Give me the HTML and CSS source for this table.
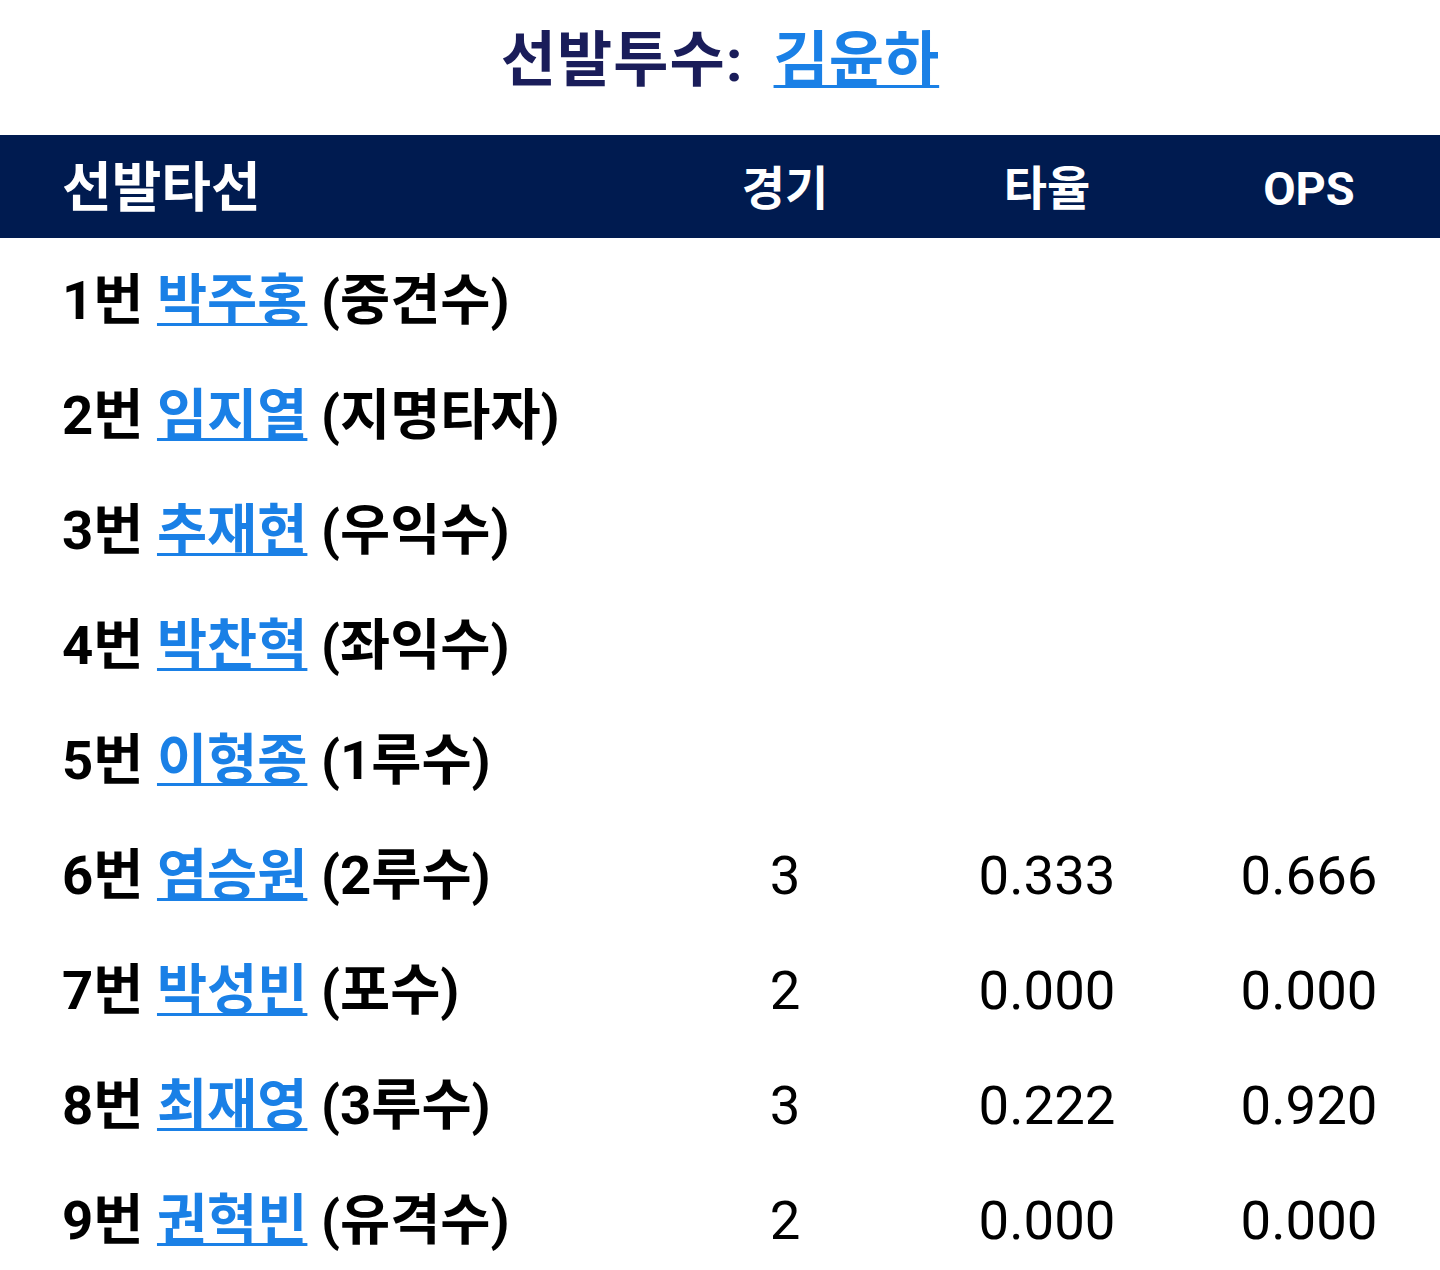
FILE: index.html
```html
<!DOCTYPE html>
<html lang="ko">
<head>
<meta charset="utf-8">
<link rel="stylesheet" href="styles.css">
</head>
<body>
<h1 class="title"><span class="label">선발투수:</span> <a class="link" href="#">김윤하</a></h1>
<div class="table">
  <div class="head">
    <div class="cell name-cell">선발타선</div>
    <div class="cell num">경기</div>
    <div class="cell num">타율</div>
    <div class="cell num">OPS</div>
  </div>
  <div class="row"><div class="cell name-cell">1번 <a class="link" href="#">박주홍</a> (중견수)</div><div class="cell num stat"></div><div class="cell num stat"></div><div class="cell num stat"></div></div>
  <div class="row"><div class="cell name-cell">2번 <a class="link" href="#">임지열</a> (지명타자)</div><div class="cell num stat"></div><div class="cell num stat"></div><div class="cell num stat"></div></div>
  <div class="row"><div class="cell name-cell">3번 <a class="link" href="#">추재현</a> (우익수)</div><div class="cell num stat"></div><div class="cell num stat"></div><div class="cell num stat"></div></div>
  <div class="row"><div class="cell name-cell">4번 <a class="link" href="#">박찬혁</a> (좌익수)</div><div class="cell num stat"></div><div class="cell num stat"></div><div class="cell num stat"></div></div>
  <div class="row"><div class="cell name-cell">5번 <a class="link" href="#">이형종</a> (1루수)</div><div class="cell num stat"></div><div class="cell num stat"></div><div class="cell num stat"></div></div>
  <div class="row"><div class="cell name-cell">6번 <a class="link" href="#">염승원</a> (2루수)</div><div class="cell num stat">3</div><div class="cell num stat">0.333</div><div class="cell num stat">0.666</div></div>
  <div class="row"><div class="cell name-cell">7번 <a class="link" href="#">박성빈</a> (포수)</div><div class="cell num stat">2</div><div class="cell num stat">0.000</div><div class="cell num stat">0.000</div></div>
  <div class="row"><div class="cell name-cell">8번 <a class="link" href="#">최재영</a> (3루수)</div><div class="cell num stat">3</div><div class="cell num stat">0.222</div><div class="cell num stat">0.920</div></div>
  <div class="row"><div class="cell name-cell">9번 <a class="link" href="#">권혁빈</a> (유격수)</div><div class="cell num stat">2</div><div class="cell num stat">0.000</div><div class="cell num stat">0.000</div></div>
</div>
</body>
</html>
```
FILE: styles.css
```css
html, body {
  margin: 0;
  padding: 0;
  background: #ffffff;
}
body {
  font-family: Roboto, "Noto Sans CJK KR", sans-serif;
  color: #000000;
  width: 1440px;
}
.title {
  margin: 0;
  height: 135px;
  display: flex;
  align-items: center;
  justify-content: center;
  gap: 30px;
  font-size: 60px;
  font-weight: 700;
  color: #1a1d5a;
  padding-bottom: 26px;
  box-sizing: border-box;
}
.label {
  letter-spacing: 1px;
}
.link {
  color: #1a80e6;
  text-decoration: underline;
  text-decoration-thickness: 3px;
  text-underline-offset: 4px;
}
.table {
  display: flex;
  flex-direction: column;
}
.head, .row {
  display: grid;
  grid-template-columns: 654px 262px 262px 262px;
  align-items: center;
  box-sizing: border-box;
}
.head {
  height: 103px;
  background: #001b50;
  color: #ffffff;
  font-weight: 700;
  font-size: 54px;
  padding-top: 4px;
}
.row {
  height: 115px;
  font-size: 54.5px;
  padding-top: 9px;
}
.cell {
  line-height: 1;
}
.name-cell {
  padding-left: 62px;
  font-weight: 700;
  white-space: nowrap;
}
.num {
  text-align: center;
}
.head .num {
  font-size: 47px;
}
.stat {
  font-weight: 400;
}
```
